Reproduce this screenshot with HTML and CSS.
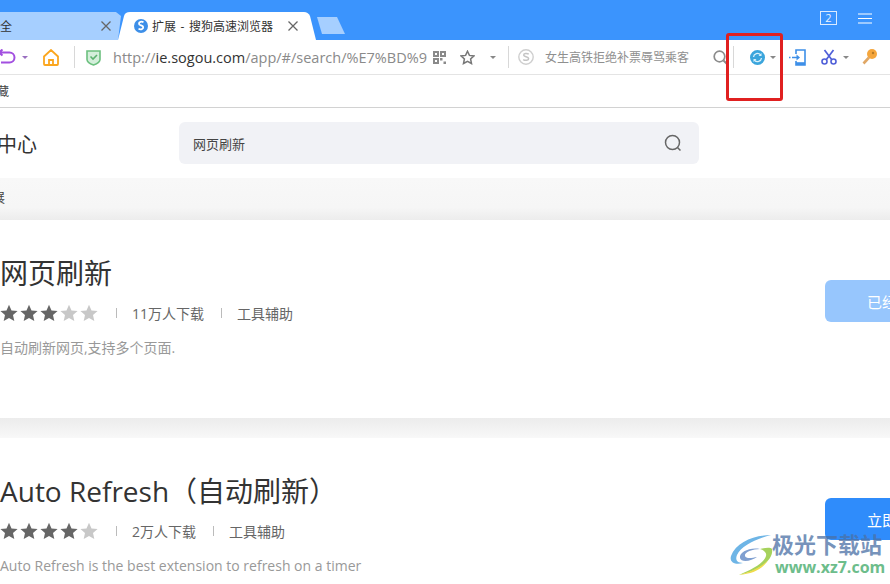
FILE: index.html
```html
<!DOCTYPE html>
<html lang="zh-CN">
<head>
    <meta charset="UTF-8">
    <title>扩展 - 搜狗高速浏览器</title>
    <link rel="stylesheet" href="styles.css">
</head>
<body>
    <svg class="defs" width="0" height="0">
        <symbol id="star" viewBox="0 0 18 18">
            <path d="M9 .8l2.5 5.6 6.1.6-4.6 4.1 1.3 6L9 14l-5.300 3.100 1.300-6L.4 7l6.100-.6z"/>
        </symbol>
        <symbol id="close" viewBox="0 0 12 12">
            <path d="M1.500 1.500l9 9M10.500 1.500l-9 9" fill="none" stroke="#666" stroke-width="1.300"/>
        </symbol>
    </svg>

    <div class="tabstrip">
        <div class="tab tab-old">
            <span class="tab-title">大全</span>
            <svg class="tab-close" width="12" height="12"><use href="#close"/></svg>
        </div>
        <div class="tab tab-active">
            <svg class="tab-logo" width="14" height="14" viewBox="0 0 14 14">
                <circle cx="7" cy="7" r="7" fill="#3d8fe8"/>
                <path d="M9.500 3.200C7.500 2 4.800 2.800 5 4.800c.2 1.800 4 1.500 4.200 3.400.2 1.700-2.200 2.800-4.700 1.600" fill="none" stroke="#fff" stroke-width="1.800"/>
            </svg>
            <span class="tab-title">扩展 - 搜狗高速浏览器</span>
            <svg class="tab-close" width="12" height="12"><use href="#close"/></svg>
        </div>
        <div class="tab-new"></div>
        <div class="window-btns">
            <span class="tab-count">2</span>
            <svg width="14" height="11" viewBox="0 0 14 11">
                <path d="M0 1h14M0 5.500h14M0 10h14" stroke="#fff" stroke-width="1"/>
            </svg>
        </div>
    </div>

    <div class="toolbar">
        <svg class="ic-back" width="17" height="16" viewBox="0 0 17 16">
            <path d="M-2 3.500h11.500a5 5 0 0 1 0 10H1M-1 3.500l3.500-3M-1 3.500l3.500 3" fill="none" stroke="#a24fe0" stroke-width="2"/>
        </svg>
        <span class="caret caret-back"></span>
        <svg class="ic-home" width="16" height="17" viewBox="0 0 16 17">
            <path d="M1 7.500L8 1l7 6.500V15a1 1 0 0 1-1 1H2a1 1 0 0 1-1-1zM6 16v-5h4v5" fill="none" stroke="#fba61e" stroke-width="1.800"/>
        </svg>
        <span class="sep sep-home"></span>
        <svg class="ic-shield" width="15" height="17" viewBox="0 0 15 17">
            <path d="M1 2h13v8.500c0 3-3.500 4.500-6.500 5.500C4.500 15 1 13.500 1 10.500z" fill="#d4efdb" stroke="#6cc07f" stroke-width="1.600"/>
            <path d="M4.500 7.500l2.500 2.500 4-4" fill="none" stroke="#5cb270" stroke-width="1.600"/>
        </svg>
        <div class="url"><span>http://</span><b>ie.sogou.com</b><span>/app/#/search/%E7%BD%9</span></div>
        <svg class="ic-qr" width="13" height="13" viewBox="0 0 13 13">
            <path d="M0 0h6v6H0zM7 0h6v6H7zM0 7h6v6H0zM7 7h2.500v2.500H7zM10.500 10.500H13V13h-2.500z" fill="#8a8a8a"/>
            <path d="M2 2h2v2H2zM9 2h2v2H9zM2 9h2v2H2z" fill="#fff"/>
        </svg>
        <svg class="ic-star" width="15" height="15" viewBox="0 0 18 18">
            <path d="M9 1.500l2.300 5 5.400.6-4 3.700 1.100 5.400L9 13.500 4.200 16.200l1.100-5.400-4-3.700 5.400-.6z" fill="none" stroke="#777" stroke-width="1.800"/>
        </svg>
        <span class="caret caret-star"></span>
        <span class="sep sep-star"></span>
        <svg class="ic-sogou" width="16" height="16" viewBox="0 0 16 16">
            <circle cx="8" cy="8" r="7.200" fill="none" stroke="#cfcfcf" stroke-width="1.400"/>
            <path d="M10.800 5.200C9 4 5.500 4.300 5.700 6.200c.2 1.800 4.800 1.300 4.900 3.400.1 1.900-3.300 2.300-5.400 1" fill="none" stroke="#c4c4c4" stroke-width="1.500"/>
        </svg>
        <div class="hot-search">女生高铁拒绝补票辱骂乘客</div>
        <svg class="ic-search" width="15" height="15" viewBox="0 0 15 15">
            <circle cx="6.500" cy="6.500" r="5.300" fill="none" stroke="#8c8c8c" stroke-width="1.700"/>
            <path d="M10.500 10.500l4 4" stroke="#8c8c8c" stroke-width="2"/>
        </svg>
        <span class="sep sep-search"></span>
        <svg class="ic-refresh" width="15" height="15" viewBox="0 0 15 15">
            <circle cx="7.500" cy="7.500" r="7.500" fill="#3ba5dc"/>
            <path d="M3.500 7A4 4 0 0 1 10.500 4.800M11.500 8A4 4 0 0 1 4.500 10.200" fill="none" stroke="#d8f1fb" stroke-width="1.300"/>
            <path d="M11.500 3v3h-3zM3.500 12V9h3z" fill="#d8f1fb"/>
        </svg>
        <span class="caret caret-refresh"></span>
        <svg class="ic-phone" width="17" height="17" viewBox="0 0 17 17">
            <path d="M7 5V1h9v15H7v-4" fill="none" stroke="#3d8fe8" stroke-width="1.600"/>
            <path d="M7 13.200h9V16H7z" fill="#3d8fe8"/>
            <path d="M0 8.500h1.500M3 8.500h5" stroke="#3d8fe8" stroke-width="1.500"/>
            <path d="M11 8.500L7.500 5.500v6z" fill="#3d8fe8"/>
        </svg>
        <svg class="ic-cut" width="16" height="16" viewBox="0 0 16 16">
            <path d="M3.500 1l7.500 10M12.500 1L5 11" fill="none" stroke="#4f5fd8" stroke-width="1.700"/>
            <circle cx="3.500" cy="12.500" r="2.500" fill="none" stroke="#4f5fd8" stroke-width="1.600"/>
            <circle cx="12.500" cy="12.500" r="2.500" fill="none" stroke="#4f5fd8" stroke-width="1.600"/>
        </svg>
        <span class="caret caret-cut"></span>
        <svg class="ic-key" width="15" height="16" viewBox="0 0 15 16">
            <circle cx="10" cy="5" r="5" fill="#f5a63c"/>
            <circle cx="11" cy="4" r="1.200" fill="#b97a24"/>
            <path d="M7 8.500L1.500 14.500" stroke="#e0a765" stroke-width="2.600"/>
        </svg>
    </div>

    <div class="bookmarks"><span>收藏</span></div>

    <header class="page-head">
        <div class="page-title">扩展中心</div>
        <div class="search-box">
            <span>网页刷新</span>
            <svg width="18" height="18" viewBox="0 0 18 18">
                <circle cx="8.500" cy="8.500" r="7" fill="none" stroke="#666" stroke-width="1.500"/>
                <path d="M13.500 13.500l3 3" stroke="#666" stroke-width="1.500"/>
            </svg>
        </div>
    </header>

    <div class="result-bar"><span>扩展</span></div>

    <section class="ext-card">
        <div>
            <h2 class="ext-name">网页刷新</h2>
            <div class="ext-meta">
                <span class="stars">
                    <svg class="on"><use href="#star"/></svg><svg class="on"><use href="#star"/></svg><svg class="on"><use href="#star"/></svg><svg><use href="#star"/></svg><svg><use href="#star"/></svg>
                </span>
                <i></i><span>11万人下载</span><i></i><span>工具辅助</span>
            </div>
            <p class="ext-desc">自动刷新网页,支持多个页面.</p>
        </div>
        <button class="ext-btn installed">已经安装</button>
    </section>

    <div class="card-gap"></div>

    <section class="ext-card">
        <div>
            <h2 class="ext-name">Auto Refresh（自动刷新）</h2>
            <div class="ext-meta">
                <span class="stars">
                    <svg class="on"><use href="#star"/></svg><svg class="on"><use href="#star"/></svg><svg class="on"><use href="#star"/></svg><svg class="on"><use href="#star"/></svg><svg><use href="#star"/></svg>
                </span>
                <i></i><span>2万人下载</span><i></i><span>工具辅助</span>
            </div>
            <p class="ext-desc">Auto Refresh is the best extension to refresh on a timer</p>
        </div>
        <button class="ext-btn">立即安装</button>
    </section>

    <!-- 页面上的标注和水印 -->
    <div class="red-mark"></div>
    <div class="watermark">
        <svg width="44" height="42" viewBox="0 0 44 42">
            <path d="M41 1C24 1 6 8 1 22c-2 7 5 9 12 7-6 0-8-3-6-8C11 12 26 5 41 1z" fill="#6eb5e6"/>
            <path d="M30 15c-10-2-21 3-20 9 1 5 12 3 17-1-5 1-11 2-12-1-1-4 8-7 15-7z" fill="#7f9fd0"/>
            <path d="M42 15c2 10-12 22-33 26 14-6 25-12 27-19 1-3-2-6-6-7 5-1 10-2 12 0z" fill="#a6d25c"/>
            <path d="M9 41c12-3 23-8 29-15-5 9-15 14-29 15z" fill="#efdc4a"/>
        </svg>
        <div class="wm-text">
            <div class="wm-name">极光下载站</div>
            <div class="wm-url">www.xz7.com</div>
        </div>
    </div>
</body>
</html>
```

FILE: styles.css
```css
* {
    margin: 0;
    padding: 0;
    box-sizing: border-box;
}

html, body {
    width: 890px;
    height: 584px;
    overflow: hidden;
}

body {
    position: relative;
    background: #fff;
    color: #333;
    font-family: "Open Sans", "Noto Sans CJK SC", sans-serif;
}

.defs {
    display: block;
    height: 0;
}

/* tabs */
.tabstrip {
    display: flex;
    height: 40px;
    padding-top: 12px;
    background: #3b94fd;
}

.tab {
    display: flex;
    align-items: center;
    height: 28px;
    font-size: 12px;
    color: #333;
}

.tab-old {
    width: 124px;
    margin-right: -6px;
    background: #a6cfff;
    border-top-right-radius: 8px;
    clip-path: polygon(0 0, 116px 0, 121px 4px, 118px 28px, 0 28px);
}

.tab-old .tab-title {
    margin-left: -12px;
}

.tab-old .tab-close {
    margin-left: 88px;
}

.tab-active {
    position: relative;
    width: 198px;
    padding-left: 16px;
    background: #fff;
    clip-path: path("M0 28 L6 4 Q7 0 12 0 L186 0 Q190 0 192 4 L198 28 Z");
}

.tab-logo {
    margin-right: 4px;
}

.tab-active .tab-title {
    word-spacing: 1.500px;
}

.tab-active .tab-close {
    margin-left: 14px;
}

.tab-new {
    width: 28px;
    height: 17px;
    margin: 5px 0 0 1px;
    background: #a6cfff;
    clip-path: polygon(0 0, 20px 0, 28px 17px, 5px 17px);
}

.window-btns {
    display: flex;
    align-items: flex-start;
    gap: 21px;
    margin-left: auto;
    margin-right: 18px;
    margin-top: -1px;
}

.tab-count {
    width: 17px;
    height: 14px;
    border: 1px solid #dcebff;
    color: #eaf3ff;
    font-size: 11px;
    line-height: 12px;
    text-align: center;
}

.window-btns svg {
    margin-top: 2px;
}

/* toolbar */
.toolbar {
    display: flex;
    align-items: center;
    height: 35px;
    border-bottom: 1px solid #e4e4e4;
}

.toolbar svg,
.toolbar .sep,
.toolbar .caret {
    flex: none;
}

.sep {
    width: 1px;
    height: 22px;
    background: #d8d8d8;
}

.caret {
    width: 0;
    height: 0;
    border: 3px solid transparent;
    border-top: 3px solid #888;
    border-bottom: 0;
}

.caret-back { margin-left: 5px; border-top-color: #9a6fc0; }
.ic-home { margin-left: 15px; }
.sep-home { margin-left: 15px; }
.ic-shield { margin-left: 11px; }

.url {
    width: 320px;
    margin-left: 12px;
    font-size: 14.500px;
    white-space: nowrap;
    color: #8a8a8a;
}

.url b {
    font-weight: 400;
    color: #333;
}

.ic-star { margin-left: 14px; }
.caret-star { margin-left: 15px; }
.sep-star { margin-left: 12px; }
.ic-sogou { margin-left: 9px; }

.hot-search {
    width: 168px;
    margin-left: 11px;
    font-size: 12px;
    color: #8f8f8f;
    white-space: nowrap;
}

.sep-search { margin-left: 5px; }
.ic-refresh { margin-left: 16px; }
.caret-refresh { margin-left: 5px; }
.ic-phone { margin-left: 13px; }
.ic-cut { margin-left: 15px; }
.caret-cut { margin-left: 6px; }
.ic-key { margin-left: 13px; }

.bookmarks {
    height: 33px;
    padding-top: 1px;
    border-bottom: 1px solid #d2d2d2;
    font-size: 12px;
    line-height: 32px;
    color: #444;
}

.bookmarks span {
    margin-left: -15px;
}

/* page */
.page-head {
    display: flex;
    align-items: center;
    height: 70px;
}

.page-title {
    width: 179px;
    margin-left: -43px;
    flex: none;
    font-size: 20px;
    color: #333;
    white-space: nowrap;
}

.search-box {
    display: flex;
    align-items: center;
    justify-content: space-between;
    width: 520px;
    height: 42px;
    margin-left: 43px;
    padding: 0 17px 0 14px;
    background: #f1f2f6;
    border-radius: 6px;
    font-size: 13px;
    color: #444;
}

.result-bar {
    height: 42px;
    background: linear-gradient(#f8f8f8, #f6f6f6 70%, #ececec);
    font-size: 13px;
    line-height: 39px;
    color: #444;
}

.result-bar span {
    margin-left: -21px;
}

.ext-card {
    display: grid;
    grid-template-columns: 825px 144px;
    width: 969px;
    height: 198px;
    padding-top: 35px;
    background: #fff;
}

.ext-name {
    height: 36px;
    font-size: 28px;
    font-weight: 400;
    line-height: 36px;
    color: #333;
    white-space: nowrap;
}

.ext-meta {
    display: flex;
    align-items: center;
    height: 20px;
    margin-top: 12px;
    font-size: 14px;
    color: #666;
}

.ext-meta i {
    width: 1px;
    height: 10px;
    margin: 0 15px 0 17px;
    background: #bbb;
}

.stars {
    display: flex;
    gap: 2px;
    width: 99px;
}

.stars svg {
    width: 18px;
    height: 18px;
    fill: #c8c8c8;
}

.stars svg.on {
    fill: #666;
}

.ext-desc {
    margin-top: 15px;
    font-size: 14px;
    line-height: 20px;
    color: #999;
    white-space: nowrap;
}

.ext-btn {
    width: 144px;
    height: 42px;
    margin-top: 25px;
    border: none;
    border-radius: 6px;
    background: #2f8cfb;
    color: #fff;
    font-family: inherit;
    font-size: 15px;
}

.ext-btn.installed {
    background: #97c6fd;
}

.card-gap {
    height: 20px;
    background: linear-gradient(#ececec, #f8f8f8);
}

/* overlays */
.red-mark {
    position: absolute;
    left: 726px;
    top: 33px;
    width: 57px;
    height: 68px;
    border: 3px solid #e02020;
    border-radius: 3px;
}

.watermark {
    position: absolute;
    left: 730px;
    top: 531px;
    display: flex;
    gap: 0;
}

.watermark svg {
    margin-top: 3px;
}

.wm-text {
    margin-left: -2px;
}

.wm-name {
    font-size: 22px;
    font-weight: 700;
    line-height: 26px;
    color: rgba(74, 112, 165, 0.75);
    white-space: nowrap;
}

.wm-url {
    margin-top: 1px;
    margin-left: 3px;
    font-size: 16px;
    font-weight: 700;
    line-height: 18px;
    color: #6dbd8b;
}
```
